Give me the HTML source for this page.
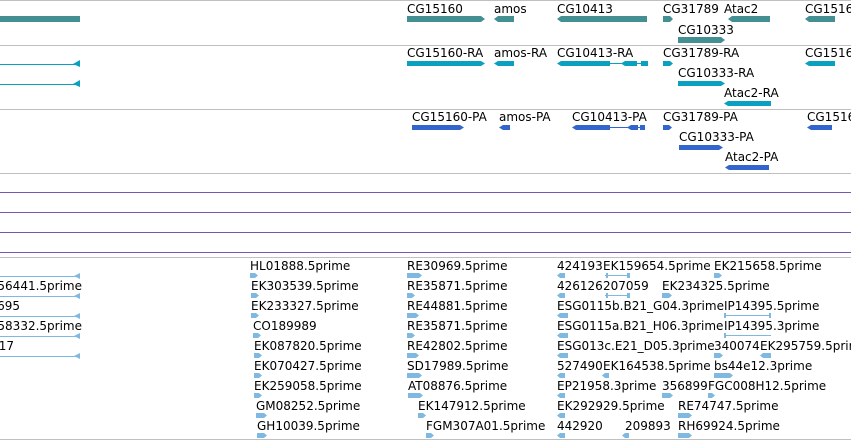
<!DOCTYPE html>
<html><head><meta charset="utf-8"><style>
html,body{margin:0;padding:0;background:#fff;width:851px;height:441px;overflow:hidden}
svg text{font-family:"DejaVu Sans","Liberation Sans",sans-serif;font-size:12px;fill:#000}
</style></head><body>
<svg width="851" height="441" xmlns="http://www.w3.org/2000/svg">
<g fill="#c0c0c0">
<rect x="0" y="0" width="851" height="1"/><rect x="0" y="45" width="851" height="1"/>
<rect x="0" y="109" width="851" height="1"/><rect x="0" y="173" width="851" height="1"/>
<rect x="0" y="257" width="851" height="1"/><rect x="0" y="439" width="851" height="1"/>
</g>
<g fill="#7a55b0">
<rect x="0" y="192" width="851" height="1"/><rect x="0" y="212" width="851" height="1"/>
<rect x="0" y="232" width="851" height="1"/><rect x="0" y="252" width="851" height="1"/>
</g>
<g fill="#438f92">
<rect x="0" y="16" width="80" height="6"/>
<polygon points="407,16 481,16 485,19 481,22 407,22"/>
<polygon points="498,16 514,16 514,22 498,22 494,19"/>
<polygon points="561,16 647,16 647,22 561,22 557,19"/>
<polygon points="663,16 670,16 673,19 670,22 663,22"/>
<polygon points="732,16 770,16 770,22 732,22 728,19"/>
<polygon points="809,16 835,16 835,22 809,22 805,19"/>
<polygon points="678,37 721,37 725,40 721,43 678,43"/>
</g>
<text x="407" y="13">CG15160</text><text x="494" y="13">amos</text><text x="557" y="13">CG10413</text>
<text x="663" y="13">CG31789</text><text x="724" y="13">Atac2</text><text x="805" y="13">CG1516</text>
<text x="678" y="34">CG10333</text>
<g fill="#0aa0c0">
<rect x="0" y="64" width="76" height="1"/><polygon points="73,64 80,60 80,67"/>
<rect x="0" y="84" width="76" height="1"/><polygon points="73,84 80,80 80,87"/>
<polygon points="407,61 481,61 485,63.5 481,66 407,66"/>
<polygon points="498,61 514,61 514,66 498,66 494,63.5"/>
<polygon points="561,61 610,61 610,66 561,66 557,63.5"/>
<polygon points="625,61 637,61 637,66 625,66 621,63.5"/><rect x="610" y="63" width="38" height="1"/>
<rect x="641" y="61" width="7" height="5"/>
<polygon points="663,61 670,61 673,63.5 670,66 663,66"/>
<polygon points="809,61 835,61 835,66 809,66 805,63.5"/>
<polygon points="678,81 721,81 725,83.5 721,86 678,86"/>
<polygon points="728,101 771,101 771,106 728,106 724,103.5"/>
</g>
<text x="407" y="57">CG15160-RA</text><text x="494" y="57">amos-RA</text><text x="557" y="57">CG10413-RA</text>
<text x="663" y="57">CG31789-RA</text><text x="805" y="57">CG1516</text>
<text x="678" y="77">CG10333-RA</text><text x="724" y="97">Atac2-RA</text>
<g fill="#3366cc">
<polygon points="412,125 460,125 464,127.5 460,130 412,130"/>
<polygon points="503,125 510,125 510,130 503,130 499,127.5"/>
<polygon points="576,125 610,125 610,130 576,130 572,127.5"/><rect x="610" y="127" width="35" height="1"/>
<polygon points="631,125 638,125 638,130 631,130 627,127.5"/><rect x="640" y="125" width="5" height="5"/>
<polygon points="663,125 669,125 672,127.5 669,130 663,130"/>
<polygon points="811,125 832,125 832,130 811,130 807,127.5"/>
<polygon points="679,145 719,145 723,147.5 719,150 679,150"/>
<polygon points="729,165 769,165 769,170 729,170 725,167.5"/>
</g>
<text x="412" y="121">CG15160-PA</text><text x="499" y="121">amos-PA</text><text x="572" y="121">CG10413-PA</text>
<text x="663" y="121">CG31789-PA</text><text x="807" y="121">CG1516</text>
<text x="679" y="141">CG10333-PA</text><text x="725" y="161">Atac2-PA</text>
<g fill="#7fb8e0">
<rect x="0" y="276" width="76" height="1"/><polygon points="74,276 80,273 80,279"/>
<rect x="0" y="296" width="76" height="1"/><polygon points="74,296 80,293 80,299"/>
<rect x="0" y="316" width="76" height="1"/><polygon points="74,316 80,313 80,319"/>
<rect x="0" y="336" width="76" height="1"/><polygon points="74,336 80,333 80,339"/>
<rect x="0" y="356" width="76" height="1"/><polygon points="74,356 80,353 80,359"/>
<polygon points="250,273 255,273 258,275.5 255,278 250,278"/>
<polygon points="251,293 256,293 259,295.5 256,298 251,298"/>
<polygon points="251,313 256,313 259,315.5 256,318 251,318"/>
<polygon points="253,333 258,333 261,335.5 258,338 253,338"/>
<polygon points="254,353 259,353 262,355.5 259,358 254,358"/>
<polygon points="254,373 259,373 262,375.5 259,378 254,378"/>
<polygon points="254,393 259,393 262,395.5 259,398 254,398"/>
<polygon points="256,413 264,413 267,415.5 264,418 256,418"/>
<polygon points="257,433 264,433 267,435.5 264,438 257,438"/>
<polygon points="407,273 419,273 422,275.5 419,278 407,278"/>
<polygon points="407,293 412,293 415,295.5 412,298 407,298"/>
<polygon points="407,313 416,313 419,315.5 416,318 407,318"/>
<polygon points="407,333 412,333 415,335.5 412,338 407,338"/>
<polygon points="407,353 416,353 419,355.5 416,358 407,358"/>
<polygon points="407,373 419,373 422,375.5 419,378 407,378"/>
<polygon points="408,393 420,393 423,395.5 420,398 408,398"/>
<polygon points="418,413 423,413 426,415.5 423,418 418,418"/>
<polygon points="426,433 431,433 434,435.5 431,438 426,438"/>
<polygon points="560,273 565,273 565,278 560,278 557,275.5"/>
<polygon points="560,293 565,293 565,298 560,298 557,295.5"/>
<polygon points="560,313 568,313 568,318 560,318 557,315.5"/>
<polygon points="560,333 568,333 568,338 560,338 557,335.5"/>
<polygon points="560,353 568,353 568,358 560,358 557,355.5"/>
<polygon points="560,373 565,373 565,378 560,378 557,375.5"/>
<polygon points="560,393 565,393 565,398 560,398 557,395.5"/>
<polygon points="560,413 565,413 565,418 560,418 557,415.5"/>
<polygon points="560,433 565,433 565,438 560,438 557,435.5"/>
<rect x="605" y="275" width="25" height="1"/><rect x="605" y="295" width="25" height="1"/>
<rect x="606" y="273" width="2" height="5"/><rect x="627" y="273" width="3" height="5"/>
<rect x="606" y="293" width="2" height="5"/><rect x="627" y="293" width="3" height="5"/>
<polygon points="662,293 669,293 672,295.5 669,298 662,298"/>
<polygon points="714,273 719,273 722,275.5 719,278 714,278"/>
<rect x="724" y="315" width="47" height="1"/><rect x="724" y="313" width="2" height="5"/><rect x="769" y="313" width="2" height="5"/>
<rect x="724" y="335" width="47" height="1"/><rect x="724" y="333" width="2" height="5"/>
<polygon points="714,353 720,353 723,355.5 720,358 714,358"/>
<polygon points="763,353 771,353 771,358 763,358 760,355.5"/>
<polygon points="605,373 609,373 609,378 605,378 602,375.5"/>
<polygon points="714,373 730,373 733,375.5 730,378 714,378"/>
<polygon points="662,393 670,393 673,395.5 670,398 662,398"/>
<polygon points="708,393 712,393 715,395.5 712,398 708,398"/>
<polygon points="678,413 689,413 692,415.5 689,418 678,418"/>
<polygon points="625,433 629,433 629,438 625,438 622,435.5"/>
<polygon points="678,433 689,433 692,435.5 689,438 678,438"/>
</g>
<g>
<text x="82" y="290" text-anchor="end">EK156441.5prime</text>
<text x="20" y="310" text-anchor="end">695</text>
<text x="82" y="330" text-anchor="end">EK158332.5prime</text>
<text x="14" y="350" text-anchor="end">17</text>
<text x="250" y="270">HL01888.5prime</text>
<text x="251" y="290">EK303539.5prime</text>
<text x="251" y="310">EK233327.5prime</text>
<text x="253" y="330">CO189989</text>
<text x="254" y="350">EK087820.5prime</text>
<text x="254" y="370">EK070427.5prime</text>
<text x="254" y="390">EK259058.5prime</text>
<text x="256" y="410">GM08252.5prime</text>
<text x="257" y="430">GH10039.5prime</text>
<text x="407" y="270">RE30969.5prime</text>
<text x="407" y="290">RE35871.5prime</text>
<text x="407" y="310">RE44881.5prime</text>
<text x="407" y="330">RE35871.5prime</text>
<text x="407" y="350">RE42802.5prime</text>
<text x="407" y="370">SD17989.5prime</text>
<text x="408" y="390">AT08876.5prime</text>
<text x="418" y="410">EK147912.5prime</text>
<text x="426" y="430">FGM307A01.5prime</text>
<text x="557" y="270">424193</text><text x="603" y="270">EK159654.5prime</text><text x="714" y="270">EK215658.5prime</text>
<text x="557" y="290">426126</text><text x="603" y="290">207059</text><text x="662" y="290">EK234325.5prime</text>
<text x="557" y="310">ESG0115b.B21_G04.3prime</text><text x="724" y="310">IP14395.5prime</text>
<text x="557" y="330">ESG0115a.B21_H06.3prime</text><text x="724" y="330">IP14395.3prime</text>
<text x="557" y="350">ESG013c.E21_D05.3prime</text><text x="714" y="350">340074</text><text x="760" y="350">EK295759.5prime</text>
<text x="557" y="370">527490</text><text x="603" y="370">EK164538.5prime</text><text x="714" y="370">bs44e12.3prime</text>
<text x="557" y="390">EP21958.3prime</text><text x="662" y="390">356899</text><text x="708" y="390">FGC008H12.5prime</text>
<text x="557" y="410">EK292929.5prime</text><text x="678" y="410">RE74747.5prime</text>
<text x="557" y="430">442920</text><text x="625" y="430">209893</text><text x="678" y="430">RH69924.5prime</text>
</g>
</svg>
</body></html>
